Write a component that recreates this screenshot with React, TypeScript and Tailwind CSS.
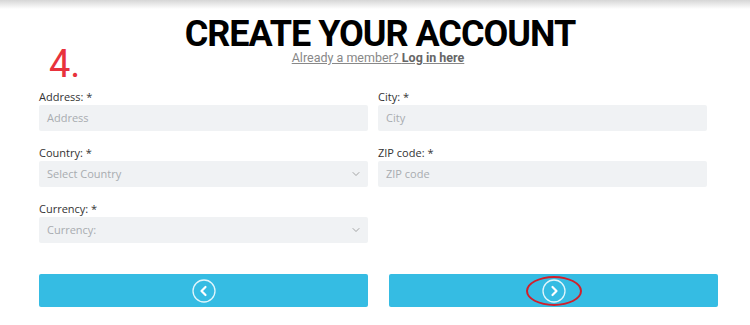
import { ChevronDown } from 'lucide-react';

function Field({ label, placeholder, select }: { label: string; placeholder: string; select?: boolean }) {
  return (
    <div className="flex flex-col">
      <label className="text-[11px] leading-[14px] text-[#333] mb-[1px]">{label}</label>
      <div className="h-[26px] bg-[#f0f2f4] rounded-[2px] flex items-center justify-between pl-[8px] pr-[6px]">
        <span className="text-[11px] text-[#a8acb0]">{placeholder}</span>
        {select && <ChevronDown className="w-[12px] h-[12px] text-[#888]" strokeWidth={1.5} />}
      </div>
    </div>
  );
}

function NavButton({ dir, marked }: { dir: 'left' | 'right'; marked?: boolean }) {
  return (
    <button className="relative h-[33px] bg-[#35bce3] rounded-[2px] flex items-center justify-center">
      <svg width="24" height="24" viewBox="0 0 24 24" fill="none">
        <circle cx="12" cy="12" r="11" stroke="white" strokeOpacity="0.85" strokeWidth="1.3" />
        {dir === 'left' ? (
          <path d="M13.5 8 L9.5 12 L13.5 16" stroke="white" strokeWidth="2.2" strokeLinecap="round" strokeLinejoin="round" />
        ) : (
          <path d="M10.5 8 L14.5 12 L10.5 16" stroke="white" strokeWidth="2.2" strokeLinecap="round" strokeLinejoin="round" />
        )}
      </svg>
      {marked && (
        <span className="absolute left-1/2 top-1/2 -translate-x-1/2 -translate-y-1/2 w-[56px] h-[30px] rounded-[50%] border-[2.5px] border-[#d11f2b]" />
      )}
    </button>
  );
}

export default function App() {
  return (
    <div className="w-[750px] h-[325px] bg-white overflow-hidden relative" style={{ fontFamily: '"Open Sans", "Liberation Sans", sans-serif' }}>
      {/* top shadow */}
      <div className="h-[9px] bg-gradient-to-b from-[#d6d6d6] to-white" />

      {/* heading */}
      <div className="flex flex-col items-center">
        <h1 className="text-[36px] leading-[36px] font-bold text-black tracking-[-1px] mt-[7px] ml-[10px]" style={{ fontFamily: 'Roboto, "Liberation Sans", sans-serif' }}>
          CREATE YOUR ACCOUNT
        </h1>
        <p className="text-[12.5px] leading-[12px] text-[#888] underline ml-[6px]" style={{ fontFamily: 'Roboto, "Liberation Sans", sans-serif' }}>
          Already a member? <span className="font-bold text-[#666]">Log in here</span>
        </p>
      </div>

      {/* step number */}
      <span className="absolute left-[49px] top-[41px] text-[38px] leading-[46px] text-[#e8323c]" style={{ fontFamily: 'Roboto, "Liberation Sans", sans-serif' }}>
        4.
      </span>

      {/* form */}
      <div className="px-[39px] pt-[26px] grid grid-cols-2 gap-x-[10px] gap-y-[15px] pr-[43px]">
        <Field label="Address: *" placeholder="Address" />
        <Field label="City: *" placeholder="City" />
        <Field label="Country: *" placeholder="Select Country" select />
        <Field label="ZIP code: *" placeholder="ZIP code" />
        <Field label="Currency: *" placeholder="Currency:" select />
      </div>

      {/* navigation */}
      <div className="pl-[39px] pr-[32px] pt-[31px] grid grid-cols-2 gap-x-[21px]">
        <NavButton dir="left" />
        <NavButton dir="right" marked />
      </div>
    </div>
  );
}
